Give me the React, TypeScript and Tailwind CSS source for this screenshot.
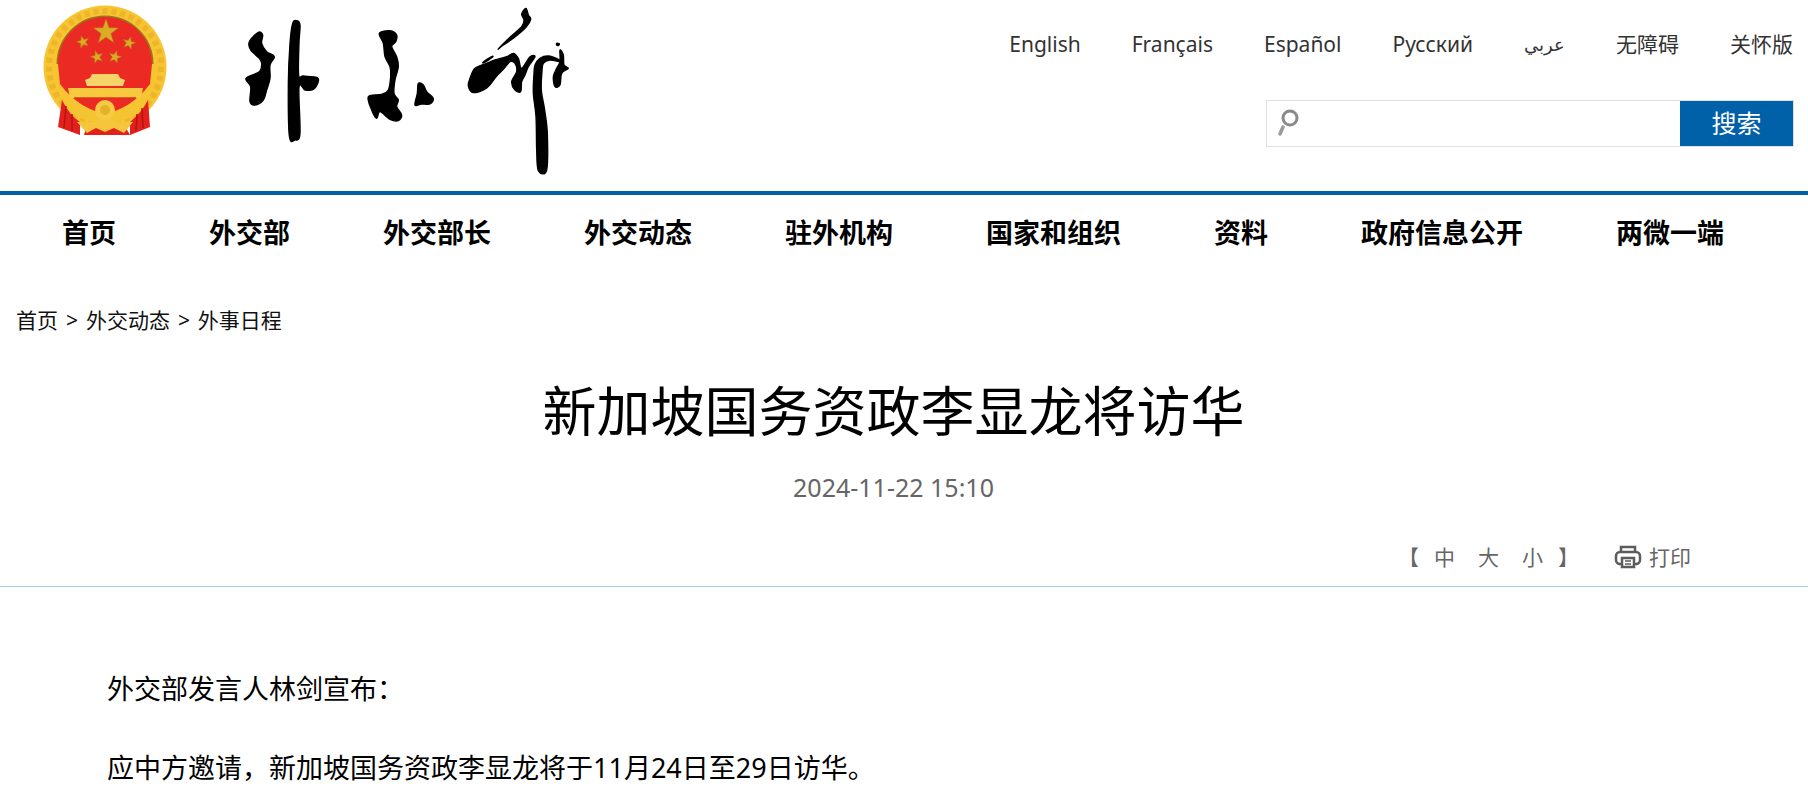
const navItems = ["首页", "外交部", "外交部长", "外交动态", "驻外机构", "国家和组织", "资料", "政府信息公开", "两微一端"];
const langs = ["English", "Français", "Español", "Русский", "عربي", "无障碍", "关怀版"];

function Star({ x, y, r, rot = 0 }: { x: number; y: number; r: number; rot?: number }) {
  const pts = [];
  for (let i = 0; i < 10; i++) {
    const rad = i % 2 === 0 ? r : r * 0.4;
    const a = ((i * 36 + rot - 90) * Math.PI) / 180;
    pts.push(`${(x + rad * Math.cos(a)).toFixed(1)},${(y + rad * Math.sin(a)).toFixed(1)}`);
  }
  return <polygon points={pts.join(" ")} fill="#dcab24" stroke="#a87c1c" strokeWidth="0.5" />;
}

function Emblem() {
  return (
    <svg width="124" height="132" viewBox="43 5 124 132" className="shrink-0">
      <circle cx="105" cy="67" r="61.5" fill="#f6c531" />
      <circle cx="105" cy="67" r="56" fill="none" stroke="#eeb52c" strokeWidth="6" strokeDasharray="5 4" />
      <path d="M58 64 A47 47 0 0 1 152 64" fill="none" stroke="#9c7420" strokeWidth="3" />
      <path d="M58 64 A47 47 0 0 1 152 64 L150 84 Q132 108 105 114 Q78 108 60 84 Z" fill="#ec2a24" />
      <Star x={106} y={32} r={13} />
      <Star x={83} y={42} r={6.5} rot={-15} />
      <Star x={129} y={43} r={6.5} rot={15} />
      <Star x={97} y={57} r={6.5} rot={-15} />
      <Star x={115} y={57} r={6.5} rot={15} />
      <path d="M92 74 H118 L120 78 L125 80 L123 86 H87 L85 80 L90 78 Z" fill="#f6d469" />
      <path d="M68 88 H143 L141 98 H70 Z" fill="#f7c93f" />
      <path d="M74 98 H136" stroke="#d9381f" strokeWidth="1.5" />
      <path d="M62 100 H70 Q84 113 105 116 Q126 113 141 100 H149 L146 108 Q128 122 105 124 Q82 122 64 108 Z" fill="#f5c433" />
      <path d="M62 100 Q70 116 80 122 L80 135 L58 127 Z" fill="#e3201c" />
      <path d="M148 100 L150 127 L130 135 L130 122 Q142 112 148 100 Z" fill="#e3201c" />
      <path d="M66 106 L64 128 M72 114 L72 131 M142 108 L143 128 M137 114 L136 131" stroke="#b5140f" strokeWidth="1.5" />
      <path d="M86 128 Q105 120 126 128 L130 135 L84 135 Z" fill="#e3201c" />
      <path d="M77 122 H95 L105 116 L115 122 H133 L124 133 L114 128 L105 132 L96 128 L87 133 Z" fill="#f5c63b" />
      <circle cx="105" cy="110" r="10" fill="#f6ca45" />
      <circle cx="105" cy="110" r="5" fill="#e3b12c" />
    </svg>
  );
}

// 闭合平滑曲线
function smooth(p: number[][]) {
  const n = p.length;
  let d = `M${p[0][0]} ${p[0][1]}`;
  for (let i = 0; i < n; i++) {
    const a = p[(i - 1 + n) % n];
    const b = p[i];
    const c = p[(i + 1) % n];
    const e = p[(i + 2) % n];
    d += ` C${b[0] + (c[0] - a[0]) / 6} ${b[1] + (c[1] - a[1]) / 6} ${c[0] - (e[0] - b[0]) / 6} ${c[1] - (e[1] - b[1]) / 6} ${c[0]} ${c[1]}`;
  }
  return d + "Z";
}

const brush: number[][][] = [
  [[115, 97], [88, 125], [92, 150], [118, 175], [125, 190], [118, 215], [78, 235], [92, 260], [90, 305], [105, 315], [130, 300], [140, 270], [150, 235], [150, 195], [163, 170], [140, 155], [125, 130], [128, 105]],
  [[230, 62], [240, 75], [237, 130], [236, 225], [250, 228], [290, 232], [295, 245], [280, 268], [255, 270], [237, 262], [240, 400], [225, 420], [208, 408], [205, 250], [210, 130], [218, 70]],
  [[478, 100], [510, 92], [530, 105], [527, 125], [515, 140], [530, 170], [535, 200], [525, 240], [522, 280], [535, 300], [530, 320], [545, 345], [535, 362], [510, 358], [480, 335], [470, 355], [455, 330], [445, 290], [485, 283], [505, 270], [512, 230], [510, 200], [495, 170], [490, 130]],
  [[595, 250], [610, 255], [620, 275], [640, 295], [630, 312], [605, 312], [585, 315], [592, 280]],
  [[750, 235], [765, 205], [800, 190], [825, 180], [860, 170], [880, 160], [895, 175], [905, 205], [930, 170], [945, 170], [925, 200], [915, 225], [905, 245], [902, 275], [885, 270], [875, 245], [890, 215], [885, 190], [870, 185], [850, 208], [830, 228], [800, 264], [760, 278], [745, 258]],
  [[905, 42], [918, 25], [925, 45], [932, 58], [918, 82], [880, 115], [850, 135], [835, 147], [870, 112], [905, 80], [912, 60]],
  [[945, 195], [960, 175], [985, 168], [1015, 178], [1020, 185], [990, 180], [970, 190], [966, 215], [964, 270], [974, 330], [982, 400], [980, 510], [955, 512], [950, 450], [948, 350], [940, 280], [942, 220]],
  [[1020, 150], [1030, 165], [1032, 195], [1045, 205], [1025, 220], [1020, 255], [1005, 260], [1000, 230], [1010, 205], [1020, 185]],
  [[790, 186], [815, 170], [817, 172], [793, 188]],
  [[1010, 130], [1018, 131], [1016, 136], [1010, 135]],
];

// 书法体标识，按图形绘制
function BrushLogo() {
  return (
    <svg width="370" height="185" viewBox="0 0 1110 555" role="img" aria-label="外交部" className="shrink-0 -mt-[5px]">
      {brush.map((b, i) => (
        <path key={i} d={smooth(b)} fill="#000" stroke="#000" strokeWidth="4" strokeLinejoin="round" />
      ))}
    </svg>
  );
}

export default function App() {
  return (
    <div className="w-[1808px] h-[795px] overflow-hidden bg-white text-black font-['Noto_Sans','Noto_Sans_CJK_SC',sans-serif]">
      {/* header */}
      <div className="h-[191px] flex justify-between pr-[15px]">
        <div className="flex pl-[43px] pt-[5px] gap-[53px] items-start">
          <Emblem />
          <BrushLogo />
        </div>
        <div className="flex flex-col items-end pt-[28px]">
          <div className="flex gap-[51px] text-[21px] text-[#333] leading-[32px]">
            {langs.map((l) => (
              <span key={l} className={l === "عربي" ? "text-[18px]" : ""}>{l}</span>
            ))}
          </div>
          <div className="flex mt-[40px] h-[47px] w-[528px] -mr-px border border-[#e0e0e0]">
            <div className="flex-1 pl-[10px] pt-[7px]">
              <svg width="22" height="28" viewBox="0 0 22 28" fill="none">
                <circle cx="13" cy="10" r="7" stroke="#8a8a8a" strokeWidth="3" />
                <path d="M6 19 L3 26" stroke="#9a9a9a" strokeWidth="3.5" strokeLinecap="round" />
              </svg>
            </div>
            <div className="w-[113px] bg-[#0060a8] text-white text-[25px] flex items-center justify-center">搜索</div>
          </div>
        </div>
      </div>

      {/* nav */}
      <div className="border-t-4 border-[#0060a8] h-[80px] flex items-center pl-[62px] gap-[93px] text-[27px] font-bold">
        {navItems.map((n) => (
          <span key={n}>{n}</span>
        ))}
      </div>

      <div className="pl-[16px] pt-[34px] text-[21px] leading-[30px] text-[#111] [word-spacing:2.5px]">首页 &gt; 外交动态 &gt; 外事日程</div>

      <div className="w-[1787px] text-center">
        <h1 className="mt-[40px] text-[54px] leading-[72px] font-normal">新加坡国务资政李显龙将访华</h1>
        <p className="mt-[22px] text-[25px] leading-[36px] text-[#666]">2024-11-22 15:10</p>
      </div>

      {/* tools */}
      <div className="mt-[38px] h-[44px] border-b border-[#a9cdf0] flex justify-end items-start pr-[117px] text-[21px] text-[#666] leading-[28px]">
        <span>【</span>
        <span className="flex gap-[23px] mx-[15px]">
          <span>中</span>
          <span>大</span>
          <span>小</span>
        </span>
        <span>】</span>
        <span className="flex items-center gap-[7px] ml-[35px]">
          <svg width="28" height="24" viewBox="0 0 28 24" fill="none" stroke="#5c5c5c" strokeWidth="2.5">
            <path d="M7 7 V2 H21 V7" />
            <rect x="2" y="7" width="24" height="12" rx="4" />
            <path d="M8 13 H20 V22 H8 Z" fill="#fff" />
            <path d="M11 16 H17 M11 19 H17" strokeWidth="1.5" />
          </svg>
          打印
        </span>
      </div>

      {/* article */}
      <div className="pl-[107px] pt-[88px] text-[27px] leading-[27px] text-black">
        <p>外交部发言人林剑宣布：</p>
        <p className="mt-[52px]">应中方邀请，新加坡国务资政李显龙将于11月24日至29日访华。</p>
      </div>
    </div>
  );
}
